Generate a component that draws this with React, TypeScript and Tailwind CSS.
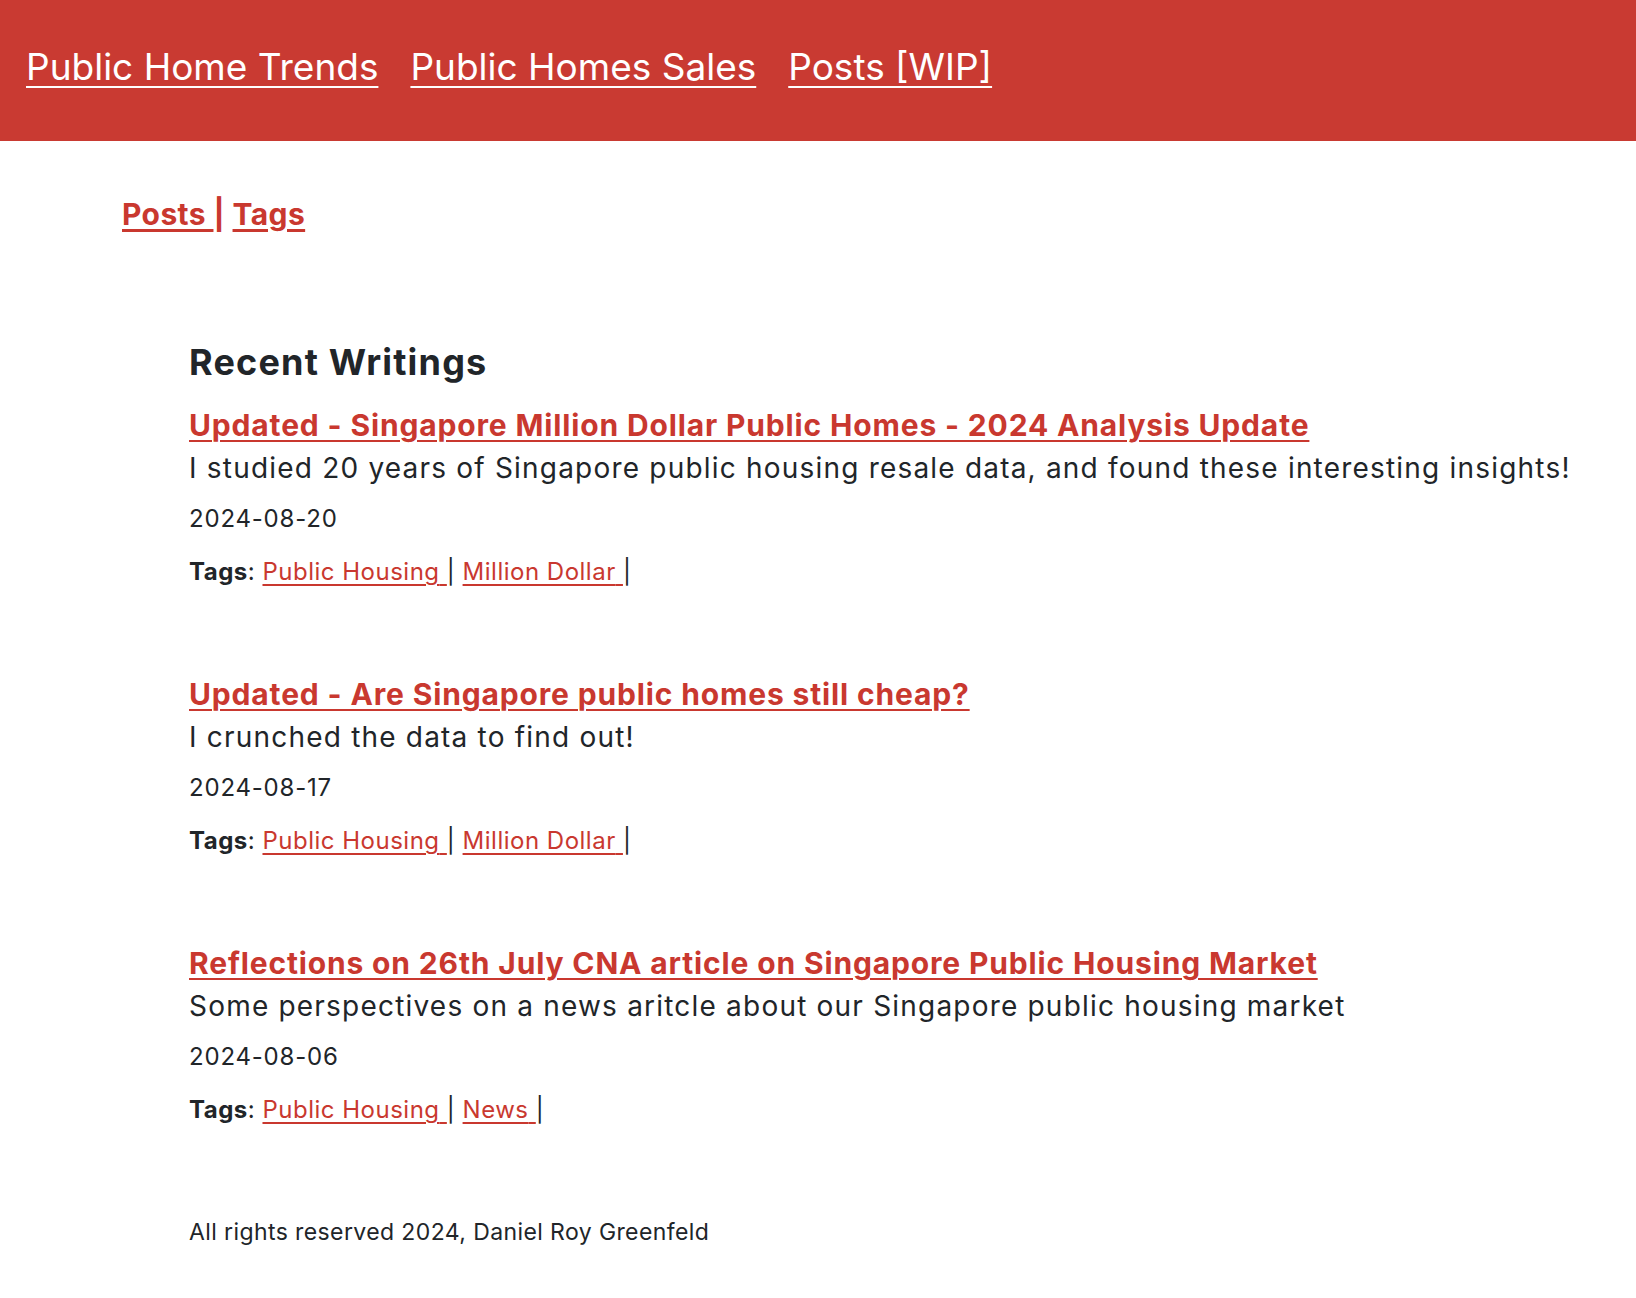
import React from 'react';

const RED = 'text-[#c9382f]';

interface Post {
  title: string;
  desc: string;
  date: string;
  tags: string[];
}

const posts: Post[] = [
  {
    title: 'Updated - Singapore Million Dollar Public Homes - 2024 Analysis Update',
    desc: 'I studied 20 years of Singapore public housing resale data, and found these interesting insights!',
    date: '2024-08-20',
    tags: ['Public Housing', 'Million Dollar'],
  },
  {
    title: 'Updated - Are Singapore public homes still cheap?',
    desc: 'I crunched the data to find out!',
    date: '2024-08-17',
    tags: ['Public Housing', 'Million Dollar'],
  },
  {
    title: 'Reflections on 26th July CNA article on Singapore Public Housing Market',
    desc: 'Some perspectives on a news aritcle about our Singapore public housing market',
    date: '2024-08-06',
    tags: ['Public Housing', 'News'],
  },
];

const PostItem: React.FC<{ post: Post }> = ({ post }) => (
  <div className="mb-[86px]">
    <a href="#" className={`block font-bold text-[30px] leading-[40px] tracking-[0.85px] underline decoration-2 underline-offset-4 ${RED}`}>
      {post.title}
    </a>
    <p className="mt-[3px] text-[28px] leading-[40px] tracking-[1.2px]">{post.desc}</p>
    <p className="mt-[15px] text-[24px] leading-[32px] tracking-[0.8px]">{post.date}</p>
    <p className="mt-[21px] text-[24px] leading-[32px] tracking-[0.5px]">
      <span className="font-bold">Tags</span>:{' '}
      {post.tags.map((tag) => (
        <React.Fragment key={tag}>
          <a href="#" className={`underline underline-offset-4 ${RED}`}>
            {tag}{' '}
          </a>
          |{' '}
        </React.Fragment>
      ))}
    </p>
  </div>
);

export default function App() {
  return (
    <div className="min-h-screen bg-white text-[#212529] font-['Inter',sans-serif]">
      {/* Top nav */}
      <header className="h-[141px] bg-[#c93a32] flex items-center gap-[32px] px-[26px] pb-2">
        <a href="#" className="text-white text-[37px] underline decoration-2 underline-offset-[6px]">Public Home Trends</a>
        <a href="#" className="text-white text-[37px] underline decoration-2 underline-offset-[6px]">Public Homes Sales</a>
        <a href="#" className="text-white text-[37px] underline decoration-2 underline-offset-[6px]">Posts [WIP]</a>
      </header>

      <div className="pl-[122px] pt-[55px]">
        <div className={`font-bold text-[30px] leading-[36px] tracking-[0.4px] ${RED}`}>
          <a href="#" className="underline underline-offset-4">Posts </a>| <a href="#" className="underline underline-offset-4">Tags</a>
        </div>
      </div>

      <main className="pl-[189px] pt-[110px]">
        <h2 className="font-bold text-[36px] leading-[40px] tracking-[1.2px] mb-[23px]">Recent Writings</h2>
        {posts.map((p) => (
          <PostItem key={p.date} post={p} />
        ))}
        <footer className="mt-[92px] text-[23px] leading-[28px] tracking-[0.4px] pb-[50px]">
          All rights reserved 2024, Daniel Roy Greenfeld
        </footer>
      </main>
    </div>
  );
}
